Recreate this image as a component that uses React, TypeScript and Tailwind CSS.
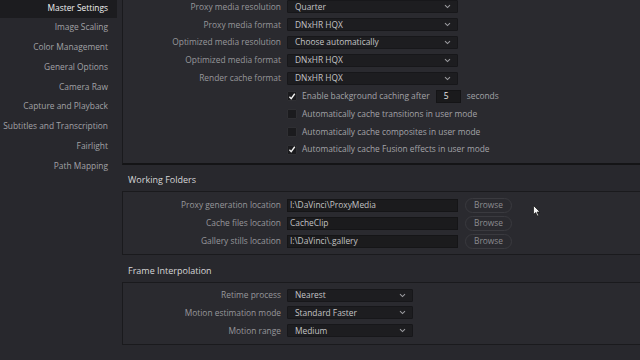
import React from "react";

const font = { fontFamily: '"Open Sans", "Noto Sans", sans-serif' };

function Chevron() {
  return (
    <svg width="7" height="5" viewBox="0 0 7 5" className="shrink-0">
      <path d="M1 1.2 L3.5 3.6 L6 1.2" fill="none" stroke="#9a9a9e" strokeWidth="1.1" />
    </svg>
  );
}

function Dropdown({ value, w }: { value: string; w: string }) {
  return (
    <div className={`${w} h-[13px] bg-[#1d1d20] border border-[#17171a] rounded-[1px] flex items-center justify-between pl-[7px] pr-[6px] text-[#c4c4c6]`}>
      <span className="leading-none">{value}</span>
      <Chevron />
    </div>
  );
}

function Row({ label, children }: { label?: string; children: React.ReactNode }) {
  return (
    <div className="h-[17.85px] flex items-center">
      <div className="w-[158px] shrink-0 text-right text-[#97979b] leading-none">{label}</div>
      <div className="ml-[6px] flex items-center">{children}</div>
    </div>
  );
}

function Check({ checked, label, extra }: { checked: boolean; label: string; extra?: React.ReactNode }) {
  return (
    <div className="flex items-center">
      <div className="w-[10px] h-[10px] bg-[#1b1b1e] border border-[#2f2f33] rounded-[1px] flex items-center justify-center">
        {checked && (
          <svg width="9" height="9" viewBox="0 0 9 9">
            <path d="M1.6 4.8 L3.6 7 L7.6 1.4" fill="none" stroke="#f2f2f2" strokeWidth="1.5" />
          </svg>
        )}
      </div>
      <span className="ml-[5px] text-[#a3a3a7] leading-none">{label}</span>
      {extra}
    </div>
  );
}

function Browse() {
  return (
    <div className="ml-[7px] w-[47px] h-[15px] rounded-full border border-[#3a3a3f] bg-[#2a2a2f] flex items-center justify-center text-[#8c8c90] leading-none">
      Browse
    </div>
  );
}

function PathInput({ value }: { value: string }) {
  return (
    <div className="w-[171px] h-[13px] bg-[#1b1b1d] border border-[#151517] flex items-center pl-[2px] text-[#c2c2c4] leading-none">
      {value}
    </div>
  );
}

const sideItems = [
  "Master Settings",
  "Image Scaling",
  "Color Management",
  "General Options",
  "Camera Raw",
  "Capture and Playback",
  "Subtitles and Transcription",
  "Fairlight",
  "Path Mapping",
];

export default function App() {
  return (
    <div className="w-[640px] h-[360px] overflow-hidden bg-[#28282d] flex text-[8.4px] relative" style={font}>
      <aside className="w-[122px] shrink-0 -mt-[2px]">
        {sideItems.map((s, i) => (
          <div
            key={s}
            className={`h-[19.75px] w-[117px] flex items-center justify-end pr-[9px] leading-none ${
              i === 0 ? "bg-[#1c1c1f] text-[#f0f0f0]" : "text-[#a2a2a6]"
            }`}
          >
            {s}
          </div>
        ))}
      </aside>
      <main className="flex-1 -mr-[20px] -mt-[9px] flex flex-col">
        <section className="bg-[#2a2a2f] border border-[#1a1a1d] border-b-2 border-b-[#141416] pt-[6px] pb-[4px]">
          <Row label="Proxy media resolution"><Dropdown value="Quarter" w="w-[171px]" /></Row>
          <Row label="Proxy media format"><Dropdown value="DNxHR HQX" w="w-[171px]" /></Row>
          <Row label="Optimized media resolution"><Dropdown value="Choose automatically" w="w-[171px]" /></Row>
          <Row label="Optimized media format"><Dropdown value="DNxHR HQX" w="w-[171px]" /></Row>
          <Row label="Render cache format"><Dropdown value="DNxHR HQX" w="w-[171px]" /></Row>
          <Row>
            <Check
              checked
              label="Enable background caching after"
              extra={
                <>
                  <div className="ml-[6px] w-[25px] h-[13px] bg-[#1a1a1c] border border-[#141416] flex items-center pl-[7px] text-[#e6e6e6] leading-none">5</div>
                  <span className="ml-[6px] text-[#a3a3a7] leading-none">seconds</span>
                </>
              }
            />
          </Row>
          <Row><Check checked={false} label="Automatically cache transitions in user mode" /></Row>
          <Row><Check checked={false} label="Automatically cache composites in user mode" /></Row>
          <Row><Check checked label="Automatically cache Fusion effects in user mode" /></Row>
        </section>

        <div className="h-[26px] pt-[4px] flex items-center pl-[6px] text-[9px] text-[#d6d6d8] leading-none">Working Folders</div>
        <section className="bg-[#2a2a2f] border border-[#1a1a1d] pt-[5px] pb-[4px]">
          <Row label="Proxy generation location"><PathInput value="I:\DaVinci\ProxyMedia" /><Browse /></Row>
          <Row label="Cache files location"><PathInput value="CacheClip" /><Browse /></Row>
          <Row label="Gallery stills location"><PathInput value="I:\DaVinci\.gallery" /><Browse /></Row>
        </section>

        <div className="h-[27px] pt-[4px] flex items-center pl-[6px] text-[9px] text-[#d6d6d8] leading-none">Frame Interpolation</div>
        <section className="bg-[#2a2a2f] border border-[#1a1a1d] pt-[3px] pb-[4px]">
          <Row label="Retime process"><Dropdown value="Nearest" w="w-[126px]" /></Row>
          <Row label="Motion estimation mode"><Dropdown value="Standard Faster" w="w-[126px]" /></Row>
          <Row label="Motion range"><Dropdown value="Medium" w="w-[126px]" /></Row>
        </section>
      </main>
      <svg className="absolute left-[533px] top-[205px]" width="8" height="12" viewBox="0 0 8 12">
        <path d="M0.5 0.5 L0.5 9.5 L2.7 7.5 L4.2 11 L5.6 10.4 L4.1 7 L7 7 Z" fill="#f4f4f4" stroke="#111" strokeWidth="0.7" />
      </svg>
    </div>
  );
}
